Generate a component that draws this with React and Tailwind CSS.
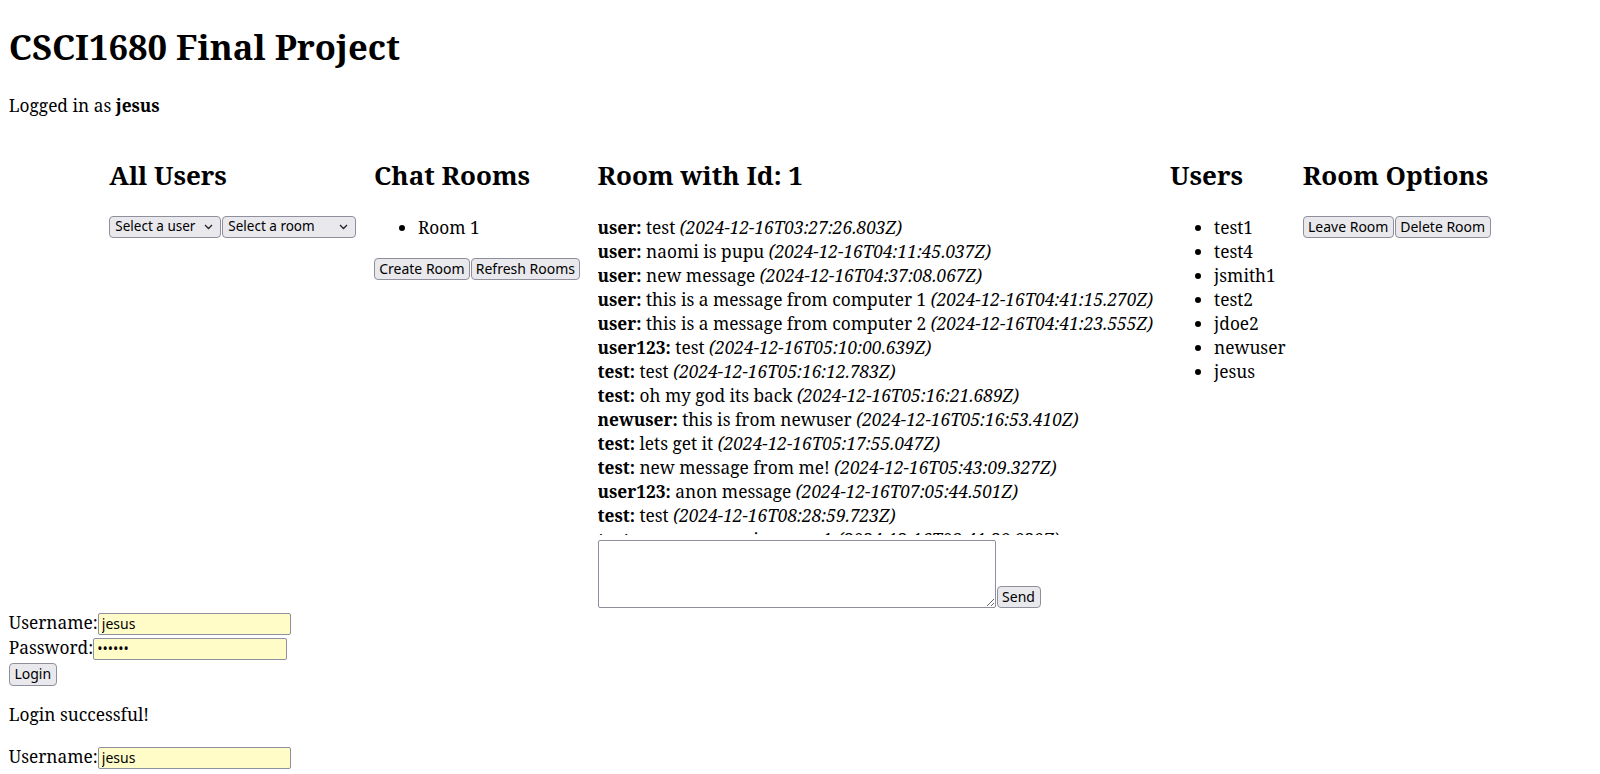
import React from 'react';

const messages = [
  ['user', 'test', '2024-12-16T03:27:26.803Z'],
  ['user', 'naomi is pupu', '2024-12-16T04:11:45.037Z'],
  ['user', 'new message', '2024-12-16T04:37:08.067Z'],
  ['user', 'this is a message from computer 1', '2024-12-16T04:41:15.270Z'],
  ['user', 'this is a message from computer 2', '2024-12-16T04:41:23.555Z'],
  ['user123', 'test', '2024-12-16T05:10:00.639Z'],
  ['test', 'test', '2024-12-16T05:16:12.783Z'],
  ['test', 'oh my god its back', '2024-12-16T05:16:21.689Z'],
  ['newuser', 'this is from newuser', '2024-12-16T05:16:53.410Z'],
  ['test', 'lets get it', '2024-12-16T05:17:55.047Z'],
  ['test', 'new message from me!', '2024-12-16T05:43:09.327Z'],
  ['user123', 'anon message', '2024-12-16T07:05:44.501Z'],
  ['test', 'test', '2024-12-16T08:28:59.723Z'],
  ['test', 'new message in room 1', '2024-12-16T08:41:29.939Z'],
];

const roomUsers = ['test1', 'test4', 'jsmith1', 'test2', 'jdoe2', 'newuser', 'jesus'];

const h2 = 'mt-[21px] mb-[23px] text-[26px] leading-[36px] font-bold whitespace-nowrap';
const btn =
  "h-[22px] border border-[#8f8f9d] bg-[#e9e9ed] rounded-[4px] text-[14px] leading-none text-black [font-family:'Noto_Sans',sans-serif] flex items-center justify-center";
const sel =
  "h-[22px] border border-[#8f8f9d] bg-[#e9e9ed] rounded-[4px] text-[13.5px] leading-none text-black [font-family:'Noto_Sans',sans-serif] flex items-center justify-between pl-[5px] pr-[7px]";
const field =
  "h-[22px] border border-[#8f8f9d] bg-[#fffcc8] rounded-[2px] px-[3px] text-[14px] text-black [font-family:'Noto_Sans',sans-serif] outline-none";

const Chevron = () => (
  <svg className="w-[9px] h-[6px]" viewBox="0 0 9 6" fill="none">
    <path d="M1 1l3.5 3.5L8 1" stroke="#222" strokeWidth="1.3" />
  </svg>
);

const Select = ({ label, width }) => (
  <div className={`${sel} ${width}`}>
    <span>{label}</span>
    <Chevron />
  </div>
);

const App = () => {
  return (
    <div className="min-h-screen bg-white text-black px-[8.8px] pt-[23.6px] [font-family:'Noto_Serif','DejaVu_Serif',serif] text-[17.3px] leading-[24px]">
      <h1 className="text-[34.6px] leading-[46px] font-bold">CSCI1680 Final Project</h1>
      <p className="mt-[24.6px]">
        Logged in as <b>jesus</b>
      </p>

      <div className="flex justify-center gap-[17.6px] mt-[17.6px]">
        {/* All users */}
        <section className="w-[247px] shrink-0">
          <h2 className={h2}>All Users</h2>
          <div className="flex gap-px">
            <Select label="Select a user" width="w-[112px]" />
            <Select label="Select a room" width="w-[134px]" />
          </div>
        </section>

        {/* Chat rooms */}
        <section className="w-[206px] shrink-0">
          <h2 className={h2}>Chat Rooms</h2>
          <ul className="list-disc pl-[44px]">
            <li>Room 1</li>
          </ul>
          <div className="flex gap-px mt-[18px]">
            <button className={`${btn} w-[96px]`}>Create Room</button>
            <button className={`${btn} w-[109px]`}>Refresh Rooms</button>
          </div>
        </section>

        {/* Room */}
        <section className="w-[555px] shrink-0">
          <h2 className={h2}>Room with Id: 1</h2>
          <div className="h-[319px] overflow-hidden whitespace-nowrap">
            {messages.map(([name, text, time], i) => (
              <div key={i}>
                <b>{name}:</b> {text} <i>({time})</i>
              </div>
            ))}
          </div>
          <div className="flex items-end pt-[5px] pb-[2px]">
            <textarea className="w-[398px] h-[68px] border border-[#8f8f9d] rounded-[2px] bg-white outline-none" />
            <button className={`${btn} w-[44px] ml-px`}>Send</button>
          </div>
        </section>

        {/* Users in room */}
        <section className="w-[115px] shrink-0">
          <h2 className={h2}>Users</h2>
          <ul className="list-disc pl-[44px]">
            {roomUsers.map((u) => (
              <li key={u}>{u}</li>
            ))}
          </ul>
        </section>

        {/* Room options */}
        <section className="w-[188px] shrink-0">
          <h2 className={h2}>Room Options</h2>
          <div className="flex gap-px">
            <button className={`${btn} w-[91px]`}>Leave Room</button>
            <button className={`${btn} w-[96px]`}>Delete Room</button>
          </div>
        </section>
      </div>

      {/* Login */}
      <div>
        <div className="flex items-end h-[25px]">
          <span>Username:</span>
          <input className={`${field} w-[193px]`} defaultValue="jesus" readOnly />
        </div>
        <div className="flex items-end h-[25px]">
          <span>Password:</span>
          <input type="password" className={`${field} w-[194px]`} defaultValue="secret" readOnly />
        </div>
        <div className="flex items-end h-[26px]">
          <button className={`${btn} w-[48px] h-[23px]`}>Login</button>
        </div>
        <p className="mt-[17px]">Login successful!</p>
        <div className="flex items-end h-[25px] mt-[17.6px]">
          <span>Username:</span>
          <input className={`${field} w-[193px]`} defaultValue="jesus" readOnly />
        </div>
      </div>
    </div>
  );
};

export default App;
